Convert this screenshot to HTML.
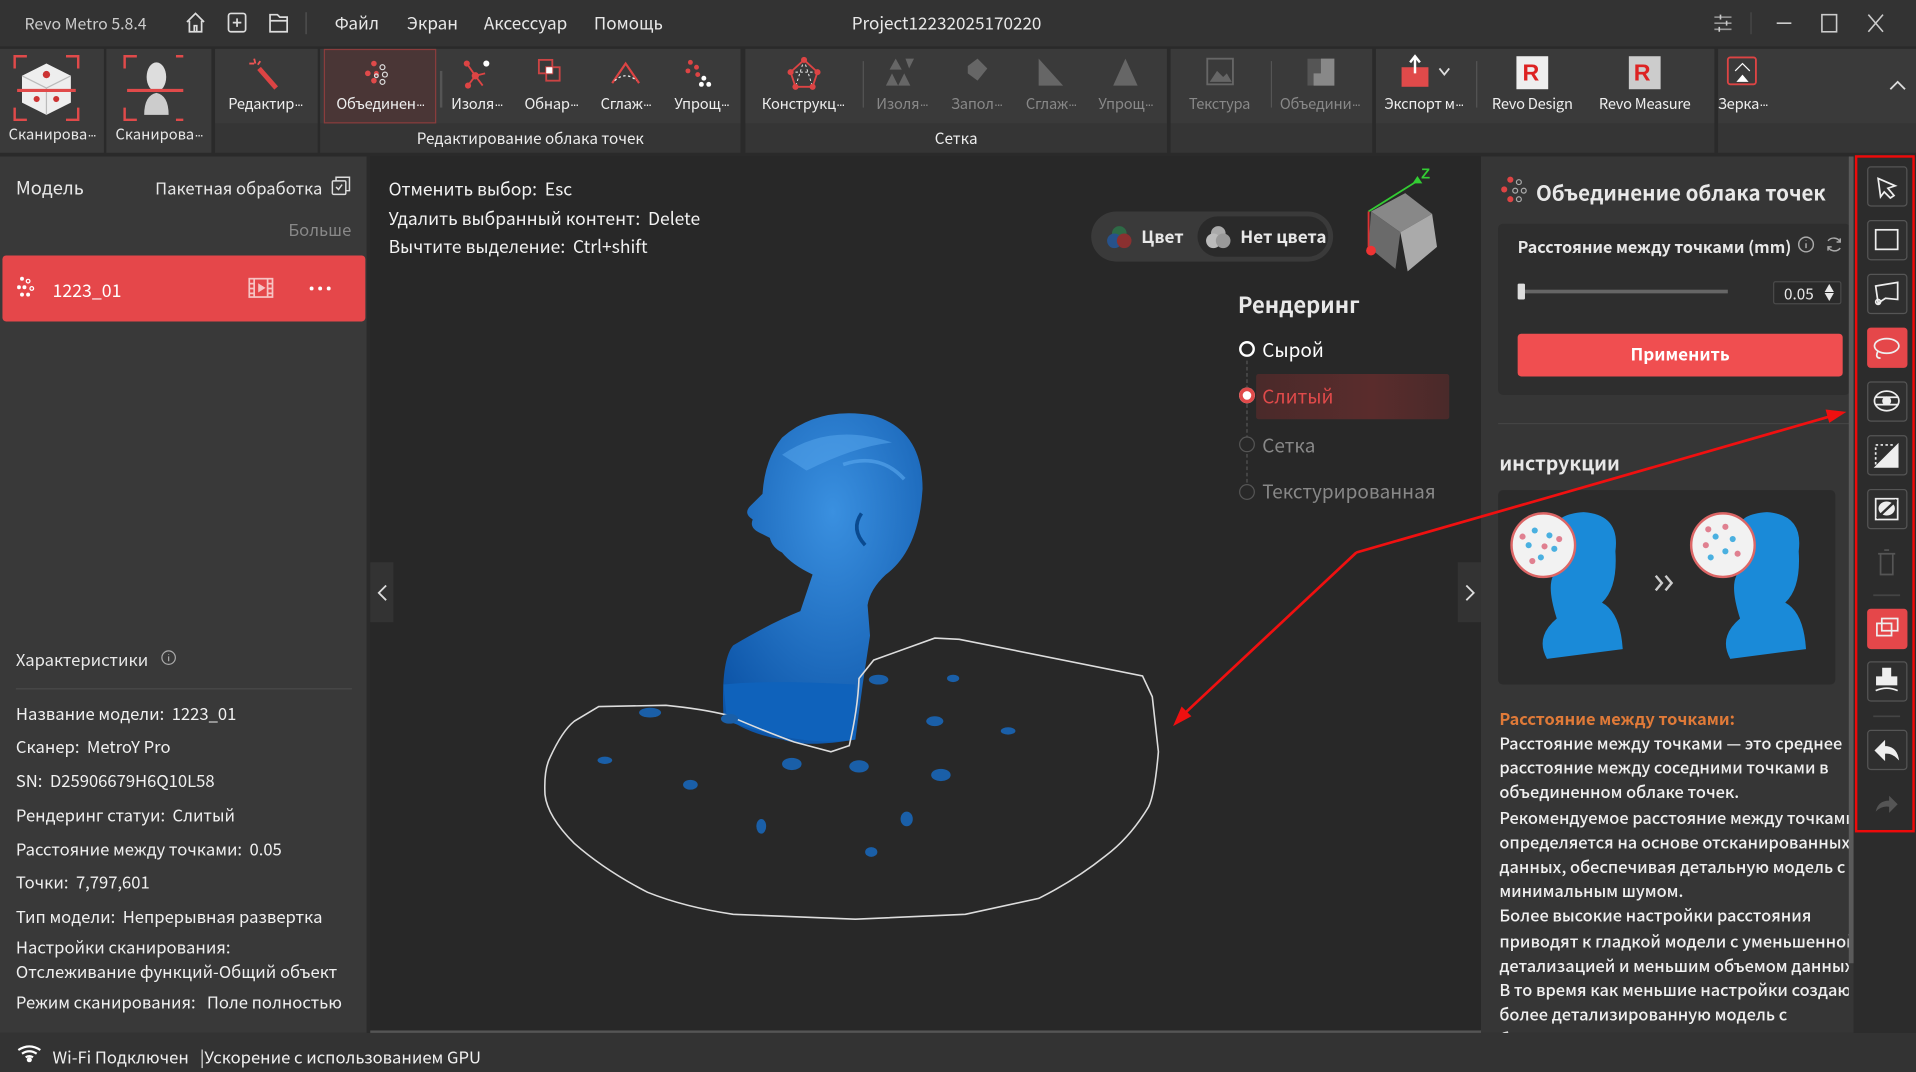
<!DOCTYPE html>
<html><head><meta charset="utf-8">
<style>
*{margin:0;padding:0;box-sizing:border-box}
html,body{width:1916px;height:1072px;overflow:hidden;background:#2a2a2a}
#root{position:absolute;left:0;top:0;width:1568px;height:877px;transform:scale(1.22194,1.22235);transform-origin:0 0;font-family:"Noto Sans CJK SC","Liberation Sans",sans-serif;color:#e8e8e8;background:#2a2a2a;overflow:hidden}
.a{position:absolute;white-space:nowrap}
.tb{background:#333}
.grp{position:absolute;top:40px;height:61px;background:#3a3a3a}
.gl{position:absolute;top:101px;height:24px;background:#353535;font-size:12.5px;text-align:center;line-height:24px;color:#eee;white-space:nowrap}
.lbl{position:absolute;top:76px;font-size:12px;color:#eee;text-align:center;width:100px;margin-left:-50px;white-space:nowrap;letter-spacing:-0.2px}
.dis{color:#888}
.e{font-family:"Liberation Sans",sans-serif;letter-spacing:-1.5px;font-size:11px}
.ico{position:absolute}
.tool{position:absolute;left:1528px;width:33px;height:33px;border:1px solid #555;border-radius:3px;background:#2f2f2f}
.info{font-size:13.6px;line-height:20px;color:#f0f0f0}
</style></head><body><div id="root">

<!-- title bar -->
<div class="a tb" style="left:0;top:0;width:1568px;height:38px"></div>
<div class="a" style="left:20px;top:9px;font-size:13px;color:#ccc">Revo Metro 5.8.4</div>
<svg class="ico" style="left:151px;top:9px" width="90" height="20" viewBox="0 0 90 20" fill="none" stroke="#ddd" stroke-width="1.4">
<path d="M2 9 L9 2 L16 9 M4 8 V17 H14 V8 M8 17 V12 H10 V17"/>
<rect x="36" y="2" width="14" height="15" rx="2"/><path d="M43 6V13M39.5 9.5H46.5"/>
<path d="M70 3H76L78 5H84V17H70Z M70 8H84"/></svg>
<div class="a" style="left:250px;top:10px;width:1px;height:18px;background:#555"></div>
<div class="a" style="left:274px;top:9px;font-size:14px">Файл</div>
<div class="a" style="left:333px;top:9px;font-size:14px">Экран</div>
<div class="a" style="left:396px;top:9px;font-size:14px">Аксессуар</div>
<div class="a" style="left:486px;top:9px;font-size:14px">Помощь</div>
<div class="a" style="left:697px;top:9px;font-size:14px">Project12232025170220</div>
<svg class="ico" style="left:1400px;top:8px" width="150" height="22" viewBox="0 0 150 22" fill="none" stroke="#ccc" stroke-width="1.3">
<path d="M3 6H17M3 11H17M3 16H17" stroke="#999"/><path d="M8 4V8M13 9V13M7 14V18"/>
<path d="M33 2V20" stroke="#444"/><path d="M54 11H66"/><rect x="91" y="4" width="12" height="14"/><path d="M129 4L141 18M141 4L129 18"/></svg>

<!-- toolbar -->
<div class="a" style="left:0;top:38px;width:1568px;height:90px;background:#2a2a2a"></div>
<div class="grp" style="left:0;width:85px;height:85px"></div>
<div class="grp" style="left:87px;width:86px;height:85px"></div>
<div class="grp" style="left:176px;width:84px"></div><div class="gl" style="left:176px;width:84px"></div>
<div class="grp" style="left:262px;width:344px"></div><div class="gl" style="left:262px;width:344px">Редактирование облака точек</div>
<div class="grp" style="left:610px;width:345px"></div><div class="gl" style="left:610px;width:345px">Сетка</div>
<div class="grp" style="left:958px;width:165px"></div><div class="gl" style="left:958px;width:165px"></div>
<div class="grp" style="left:1126px;width:277px"></div><div class="gl" style="left:1126px;width:277px"></div>
<div class="grp" style="left:1406px;width:162px"></div><div class="gl" style="left:1406px;width:162px"></div>
<div class="a" style="left:265px;top:40px;width:92px;height:61px;border:1px solid #8a3d3d;background:#4a3636"></div>
<div class="a" style="left:360px;top:58px;width:2px;height:30px;background:#555"></div>
<div class="a" style="left:706px;top:50px;width:1px;height:38px;background:#555"></div>
<div class="a" style="left:1040px;top:50px;width:1px;height:38px;background:#555"></div>
<div class="a" style="left:1208px;top:50px;width:1px;height:38px;background:#555"></div>

<!-- scan icons -->
<svg class="ico" style="left:10px;top:44px" width="140" height="56" viewBox="0 0 140 56" fill="none" stroke="#e04a4a" stroke-width="2">
<path d="M2 12V2H12M44 2H54V12M2 44V54H12M44 54H54V44"/>
<path d="M28 8L48 18V40L28 50L8 40V18Z" fill="#eee" stroke="none"/><path d="M8 18L28 28L48 18M28 28V50" stroke="#bbb" stroke-width="1"/>
<circle cx="28" cy="17" r="3" fill="#c33" stroke="none"/><circle cx="20" cy="37" r="2.5" fill="#c33" stroke="none"/><circle cx="36" cy="37" r="2.5" fill="#c33" stroke="none"/>
<path d="M4 30H52" stroke-width="2.5"/>
<g transform="translate(90,0)"><path d="M2 12V2H12M44 2H54V12M2 44V54H12M44 54H54V44"/>
<ellipse cx="28" cy="19" rx="8" ry="12" fill="#ddd" stroke="none"/><path d="M18 50Q18 34 28 32Q38 34 38 50Z" fill="#ccc" stroke="none"/><path d="M4 30H52" stroke-width="2.5"/></g></svg>
<div class="a" style="left:0;top:101px;width:85px;text-align:center;font-size:12px">Сканирова<span class="e">···</span></div>
<div class="a" style="left:87px;top:101px;width:86px;text-align:center;font-size:12px">Сканирова<span class="e">···</span></div>

<!-- toolbar icons -->
<svg class="ico" style="left:170px;top:44px" width="1400" height="32" viewBox="170 44 1400 32">
<path d="M212 56L226 72" stroke="#d44" stroke-width="4"/><path d="M208 48L209 52M204 52H208M213 50L211 53" stroke="#e55" stroke-width="1.5"/>
<g fill="#e04a4a"><circle cx="306" cy="52" r="2.3"/><circle cx="301" cy="60" r="2.3"/><circle cx="306" cy="66" r="2.3"/><circle cx="308" cy="60" r="2"/></g>
<g fill="none" stroke="#ddd" stroke-width="1"><circle cx="313" cy="55" r="2"/><circle cx="315" cy="61" r="2"/><circle cx="313" cy="67" r="2"/><circle cx="308" cy="62" r="1.5"/></g>
<path d="M382 52L389 62L383 70M389 62L397 60M389 62L395 70" stroke="#d44" stroke-width="1.5" fill="none"/><g fill="#d44"><circle cx="382" cy="52" r="2.5"/><circle cx="383" cy="70" r="2.5"/><circle cx="389" cy="62" r="3"/></g><circle cx="398" cy="52" r="2.5" fill="#fff"/>
<rect x="441" y="49" width="11" height="11" fill="none" stroke="#c44" stroke-width="1.5"/><rect x="447" y="55" width="11" height="11" fill="none" stroke="#c44" stroke-width="1.5"/><rect x="447" y="55" width="5" height="5" fill="#fff"/>
<path d="M501 68L512 52L523 68" fill="none" stroke="#d44" stroke-width="1.8"/><path d="M503 66Q512 58 521 66" fill="none" stroke="#eee" stroke-width="1" stroke-dasharray="2 2"/>
<g fill="#d44"><circle cx="565" cy="51" r="2"/><circle cx="570" cy="55" r="2"/><circle cx="563" cy="58" r="2"/><circle cx="571" cy="61" r="2"/></g><g fill="#fff"><circle cx="576" cy="64" r="2"/><circle cx="574" cy="69" r="2"/><circle cx="580" cy="69" r="2"/></g>
<path d="M658 49L647 59L651 71H665L669 59Z" fill="none" stroke="#d44" stroke-width="1.5"/><path d="M647 59H669M658 49L651 71M658 49L665 71" stroke="#eee" stroke-width="0.8" stroke-dasharray="2 2" fill="none"/><g fill="#d44"><circle cx="658" cy="49" r="2.5"/><circle cx="647" cy="59" r="2.5"/><circle cx="669" cy="59" r="2.5"/><circle cx="651" cy="71" r="2.5"/><circle cx="665" cy="71" r="2.5"/></g>
<g fill="#666"><path d="M733 48L738 57H728ZM741 48H748L744 56ZM730 60L735 70H725ZM740 60L745 70H735Z"/>
<path d="M792 54L800 48L808 56L800 66L792 60Z"/><path d="M850 48V70H870Z"/><path d="M921 48L931 70H911Z"/>
<rect x="988" y="48" width="21" height="21" fill="none" stroke="#666" stroke-width="1.5"/><path d="M990 67L996 58L1001 63L1004 60L1008 67Z"/>
<rect x="1070" y="48" width="22" height="22" fill="#555"/><path d="M1081 48H1092V70H1075V60H1081Z" fill="#888"/></g>
<rect x="1147" y="55" width="22" height="16" fill="#e04a4a"/><path d="M1158 46V60M1154 51L1158 46L1162 51" stroke="#fff" stroke-width="2" fill="none"/><path d="M1178 56L1182 61L1186 56" stroke="#ddd" stroke-width="1.5" fill="none"/>
<rect x="1241" y="46" width="26" height="27" fill="#eee"/><text x="1246" y="66" font-size="19" font-weight="bold" fill="#d22" font-family="Liberation Sans">R</text>
<rect x="1333" y="46" width="26" height="27" fill="#ccc"/><text x="1337" y="66" font-size="19" font-weight="bold" fill="#d22" font-family="Liberation Sans">R</text>
<rect x="1414" y="47" width="23" height="22" fill="none" stroke="#d44" stroke-width="1.5" rx="2"/><path d="M1420 58L1426 52L1432 58" stroke="#fff" fill="none"/><path d="M1421 67L1426 61L1431 67Z" fill="#fff"/>
<path d="M1547 73L1553 67L1559 73" stroke="#ddd" stroke-width="1.5" fill="none"/></svg>
<div class="lbl" style="left:217px">Редактир<span class="e">···</span></div>
<div class="lbl" style="left:311px">Объединен<span class="e">···</span></div>
<div class="lbl" style="left:390px">Изоля<span class="e">···</span></div>
<div class="lbl" style="left:451px">Обнар<span class="e">···</span></div>
<div class="lbl" style="left:512px">Сглаж<span class="e">···</span></div>
<div class="lbl" style="left:574px">Упрощ<span class="e">···</span></div>
<div class="lbl" style="left:657px">Конструкц<span class="e">···</span></div>
<div class="lbl dis" style="left:738px">Изоля<span class="e">···</span></div>
<div class="lbl dis" style="left:799px">Запол<span class="e">···</span></div>
<div class="lbl dis" style="left:860px">Сглаж<span class="e">···</span></div>
<div class="lbl dis" style="left:921px">Упрощ<span class="e">···</span></div>
<div class="lbl dis" style="left:998px">Текстура</div>
<div class="lbl dis" style="left:1080px">Объедини<span class="e">···</span></div>
<div class="lbl" style="left:1165px">Экспорт м<span class="e">···</span></div>
<div class="lbl" style="left:1254px">Revo Design</div>
<div class="lbl" style="left:1346px">Revo Measure</div>
<div class="lbl" style="left:1426px">Зерка<span class="e">···</span></div>

<!-- left panel -->
<div class="a" style="left:0;top:128px;width:300px;height:717px;background:#393939"></div>
<div class="a" style="left:13px;top:143px;font-size:15px">Модель</div>
<div class="a" style="left:127px;top:143px;font-size:13.6px">Пакетная обработка</div>
<svg class="ico" style="left:271px;top:144px" width="16" height="16" fill="none" stroke="#ddd" stroke-width="1.2"><rect x="1" y="4" width="11" height="11" rx="1"/><path d="M4 4V1H15V12H12M4 9L6 11L9 7"/></svg>
<div class="a" style="left:236px;top:177px;font-size:13.6px;color:#888">Больше</div>
<div class="a" style="left:2px;top:209px;width:297px;height:54px;background:#e5474a;border-radius:3px"></div>
<svg class="ico" style="left:14px;top:226px" width="22" height="22"><g fill="#fff"><circle cx="4" cy="2" r="1.6"/><circle cx="1.5" cy="9" r="1.6"/><circle cx="6" cy="9" r="1.6"/><circle cx="4" cy="15" r="1.6"/><circle cx="9" cy="15" r="1.6"/></g><g fill="none" stroke="#fff"><circle cx="9" cy="4" r="1.5"/><circle cx="12" cy="10" r="1.5"/></g></svg>
<div class="a" style="left:43px;top:227px;font-size:14.5px;color:#fff">1223_01</div>
<svg class="ico" style="left:203px;top:227px" width="22" height="18" fill="none" stroke="#f6c4c4" stroke-width="1.4"><rect x="1" y="1" width="19" height="15"/><path d="M5 1V16M16 1V16M1 5H5M1 9H5M1 13H5M16 5H20M16 9H20M16 13H20"/><path d="M9 6L13 8.5L9 11Z" fill="#f6c4c4"/></svg>
<svg class="ico" style="left:252px;top:234px" width="20" height="4" fill="#fff"><circle cx="3" cy="2" r="1.6"/><circle cx="10" cy="2" r="1.6"/><circle cx="17" cy="2" r="1.6"/></svg>
<div class="a" style="left:13px;top:529px;font-size:13.6px">Характеристики</div>
<svg class="ico" style="left:131px;top:531px" width="14" height="14" fill="none" stroke="#aaa"><circle cx="7" cy="7" r="5.5"/><path d="M7 6V10M7 4V4.5"/></svg>
<div class="a" style="left:13px;top:563px;width:275px;height:1px;background:#4a4a4a"></div>
<div class="a info" style="left:13px;top:573px">Название модели:&nbsp; 1223_01</div>
<div class="a info" style="left:13px;top:600px">Сканер:&nbsp; MetroY Pro</div>
<div class="a info" style="left:13px;top:628px">SN:&nbsp; D25906679H6Q10L58</div>
<div class="a info" style="left:13px;top:656px">Рендеринг статуи:&nbsp; Слитый</div>
<div class="a info" style="left:13px;top:684px">Расстояние между точками:&nbsp; 0.05</div>
<div class="a info" style="left:13px;top:711px">Точки:&nbsp; 7,797,601</div>
<div class="a info" style="left:13px;top:739px">Тип модели:&nbsp; Непрерывная развертка</div>
<div class="a info" style="left:13px;top:764px">Настройки сканирования:</div>
<div class="a info" style="left:13px;top:784px">Отслеживание функций-Общий объект</div>
<div class="a info" style="left:13px;top:809px">Режим сканирования:&nbsp;&nbsp; Поле полностью</div>

<!-- viewport -->
<div class="a" style="left:303px;top:128px;width:909px;height:715px;background:#282828"></div>
<div class="a" style="left:318px;top:143px;font-size:14.3px;line-height:23.5px;color:#f2f2f2">Отменить выбор:&nbsp; Esc<br>Удалить выбранный контент:&nbsp; Delete<br>Вычтите выделение:&nbsp; Ctrl+shift</div>
<div class="a" style="left:893px;top:173px;width:198px;height:41px;border-radius:21px;background:#3a3a3a"></div>
<div class="a" style="left:980px;top:177px;width:107px;height:33px;border-radius:17px;background:#2a2a2a"></div>
<svg class="ico" style="left:904px;top:183px" width="200" height="22"><circle cx="12" cy="8" r="6" fill="#2e6a46"/><circle cx="8" cy="14" r="6" fill="#27528a"/><circle cx="16" cy="14" r="6" fill="#8a3030"/>
<circle cx="93" cy="8" r="6" fill="#aaa"/><circle cx="89" cy="14" r="6" fill="#bbb"/><circle cx="97" cy="14" r="6" fill="#999"/></svg>
<div class="a" style="left:934px;top:184px;font-size:14px;font-weight:bold">Цвет</div>
<div class="a" style="left:1015px;top:184px;font-size:14px;font-weight:bold">Нет цвета</div>
<svg class="ico" style="left:1110px;top:130px" width="80" height="95" viewBox="0 0 80 95">
<path d="M12 43L40 28L62 45L36 60Z" fill="#888"/><path d="M12 43L36 60L32 90L10 72Z" fill="#6a6a6a"/><path d="M36 60L62 45L66 72L42 92Z" fill="#aaa"/>
<path d="M10 43L50 18" stroke="#3c3" stroke-width="1.5"/><path d="M50 14L54 20L46 20Z" fill="#3c3"/><text x="53" y="16" font-size="12" font-weight="bold" fill="#3c3" font-family="Liberation Sans">Z</text>
<path d="M10 43V72" stroke="#d33" stroke-width="1.5"/><circle cx="12" cy="75" r="4" fill="#e33"/></svg>
<div class="a" style="left:1013px;top:236px;font-size:18px;font-weight:bold">Рендеринг</div>
<div class="a" style="left:1028px;top:306px;width:158px;height:37px;background:linear-gradient(90deg,#4a2a2a,#5a2c2c 60%,#4a2a2a);border-radius:2px"></div>
<div class="a" style="left:1020px;top:295px;width:0;height:110px;border-left:1px dashed #555"></div>
<div class="a" style="left:1014px;top:279px;width:13px;height:13px;border:2px solid #fff;border-radius:50%;background:#282828"></div>
<div class="a" style="left:1014px;top:317px;width:13px;height:13px;border-radius:50%;background:#fff;box-shadow:0 0 0 3px #e04a4a inset"></div>
<div class="a" style="left:1014px;top:357px;width:13px;height:13px;border:1.5px solid #555;border-radius:50%;background:#282828"></div>
<div class="a" style="left:1014px;top:396px;width:13px;height:13px;border:1.5px solid #555;border-radius:50%;background:#282828"></div>
<div class="a" style="left:1033px;top:275px;font-size:15.5px;color:#fff">Сырой</div>
<div class="a" style="left:1033px;top:313px;font-size:15.5px;color:#e04a4a">Слитый</div>
<div class="a" style="left:1033px;top:353px;font-size:15.5px;color:#888">Сетка</div>
<div class="a" style="left:1033px;top:391px;font-size:15.5px;color:#888">Текстурированная</div>
<div class="a" style="left:303px;top:460px;width:19px;height:49px;background:#333"></div>
<div class="a" style="left:1193px;top:460px;width:19px;height:49px;background:#333"></div>
<svg class="ico" style="left:303px;top:128px" width="910" height="715" viewBox="303 128 910 715">
<path d="M316 479L310 485L316 491M1200 479L1206 485L1200 491" stroke="#ddd" stroke-width="1.5" fill="none"/>
<defs><radialGradient id="g" cx="0.55" cy="0.3" r="0.75"><stop offset="0" stop-color="#3a90e0"/><stop offset="1" stop-color="#0d55a8"/></radialGradient></defs>
<!-- bust -->
<path d="M592 585 Q590 540 600 528 Q630 510 655 500 L665 470 Q648 462 640 452 Q632 448 630 440 L622 436 Q613 432 616 425 Q608 420 614 414 L624 404 Q626 375 640 358 Q670 332 715 340 Q755 352 755 400 Q752 450 725 470 Q712 482 710 495 L712 520 L706 560 L700 605 Q660 612 640 605 Q610 600 592 585 Z" fill="url(#g)"/>
<path d="M592 560 Q630 556 700 560 L700 605 Q660 612 595 590 Z" fill="#0f62bb"/>
<path d="M640 372 Q680 345 730 362 Q700 365 660 385Z" fill="#5aaaf0" opacity="0.5"/>
<path d="M690 380 Q720 370 740 392" stroke="#5aa8ee" stroke-width="3" fill="none" opacity="0.6"/>
<path d="M705 420 Q696 433 708 446" stroke="#0a4a90" stroke-width="3" fill="none"/>
<!-- loop -->
<path d="M490 578 L545 577 Q575 580 595 585 Q630 600 650 607 L680 615 L695 610 Q702 580 703 555 L715 540 L765 522 L785 523 L935 553 L943 570 L948 615 Q945 650 940 660 Q925 685 905 700 Q880 720 850 735 L790 748 L700 752 L600 748 Q560 742 530 730 Q495 712 470 690 Q448 668 446 650 Q445 630 450 620 Q460 598 470 590 Z" fill="none" stroke="#ddd" stroke-width="1.3"/>
<g fill="#1a5fa8"><ellipse cx="532" cy="583" rx="9" ry="4"/><ellipse cx="495" cy="622" rx="6" ry="3"/><ellipse cx="565" cy="642" rx="6" ry="4"/><ellipse cx="648" cy="625" rx="8" ry="5"/><ellipse cx="703" cy="627" rx="8" ry="5"/><ellipse cx="770" cy="634" rx="8" ry="5"/><ellipse cx="719" cy="556" rx="8" ry="4"/><ellipse cx="780" cy="555" rx="5" ry="3"/><ellipse cx="765" cy="590" rx="7" ry="4"/><ellipse cx="825" cy="598" rx="6" ry="3"/><ellipse cx="742" cy="670" rx="5" ry="6"/><ellipse cx="623" cy="676" rx="4" ry="6"/><ellipse cx="713" cy="697" rx="5" ry="4"/><ellipse cx="597" cy="588" rx="7" ry="4"/></g>
</svg>

<!-- right panel -->
<div class="a" style="left:1212px;top:128px;width:305px;height:717px;background:#363636"></div>
<svg class="ico" style="left:1228px;top:144px" width="30" height="26"><g fill="#d44"><circle cx="8" cy="3" r="2.5"/><circle cx="3" cy="11" r="2.5"/><circle cx="8" cy="19" r="2.5"/></g><g fill="none" stroke="#aaa"><circle cx="15" cy="5" r="2"/><circle cx="12" cy="12" r="2"/><circle cx="19" cy="12" r="2"/><circle cx="15" cy="19" r="2"/></g></svg>
<div class="a" style="left:1257px;top:145px;font-size:16.8px;font-weight:bold">Объединение облака точек</div>
<div class="a" style="left:1226px;top:183px;width:288px;height:140px;background:#2e2e2e;border-radius:4px"></div>
<div class="a" style="left:1242px;top:192px;font-size:13.2px;font-weight:bold">Расстояние между точками (mm)</div>
<svg class="ico" style="left:1470px;top:192px" width="40" height="18" fill="none" stroke="#aaa" stroke-width="1.2"><circle cx="8" cy="8" r="6"/><path d="M8 7V11M8 4.5V5"/><path d="M26 5A6 6 0 0 1 36 6M36 11A6 6 0 0 1 26 10M36 3V6H33M26 13V10H29"/></svg>
<div class="a" style="left:1243px;top:237px;width:171px;height:3px;background:#666"></div>
<div class="a" style="left:1242px;top:232px;width:6px;height:13px;background:#ddd;border-radius:1px"></div>
<div class="a" style="left:1451px;top:230px;width:56px;height:19px;border:1px solid #4a4a4a;background:#2a2a2a;border-radius:2px;font-size:12.5px;line-height:17px;padding-left:8px">0.05<span style="position:absolute;right:5px;font-size:8px;line-height:7px;top:2px">▲<br>▼</span></div>
<div class="a" style="left:1242px;top:273px;width:266px;height:35px;background:#f04e50;border-radius:3px;text-align:center;line-height:34px;font-size:14px;font-weight:bold;color:#fff">Применить</div>
<div class="a" style="left:1226px;top:346px;width:288px;height:1px;background:#444"></div>
<div class="a" style="left:1227px;top:366px;font-size:16px;font-weight:bold">инструкции</div>
<div class="a" style="left:1226px;top:401px;width:276px;height:159px;background:#2b2b2b;border-radius:4px"></div>
<svg class="ico" style="left:1226px;top:401px" width="276" height="159">
<g fill="#1a8ad8"><path d="M50 40Q40 20 70 18Q100 20 96 50Q98 80 85 92Q100 100 102 130L40 138Q30 120 48 105Q40 80 45 70Z"/>
<path d="M200 40Q190 20 220 18Q250 20 246 50Q248 80 235 92Q250 100 252 130L190 138Q180 120 198 105Q190 80 195 70Z"/></g>
<circle cx="37" cy="45" r="26" fill="#f2f2f2" stroke="#d66" stroke-width="2"/><circle cx="184" cy="45" r="26" fill="#f2f2f2" stroke="#d66" stroke-width="2"/>
<g fill="#4ab0e0"><circle cx="30" cy="33" r="2.5"/><circle cx="42" cy="37" r="2.5"/><circle cx="25" cy="45" r="2.5"/><circle cx="46" cy="48" r="2.5"/><circle cx="35" cy="55" r="2.5"/><circle cx="178" cy="38" r="2.5"/><circle cx="192" cy="40" r="2.5"/><circle cx="186" cy="50" r="2.5"/><circle cx="174" cy="55" r="2.5"/></g>
<g fill="#e08090"><circle cx="20" cy="38" r="2.5"/><circle cx="50" cy="40" r="2.5"/><circle cx="38" cy="46" r="2.5"/><circle cx="28" cy="58" r="2.5"/><circle cx="172" cy="32" r="2.5"/><circle cx="186" cy="30" r="2.5"/><circle cx="196" cy="52" r="2.5"/><circle cx="170" cy="45" r="2.5"/></g>
<path d="M129 70L134 76L129 82M137 70L142 76L137 82" stroke="#ccc" stroke-width="2" fill="none"/></svg>
<div class="a" style="left:1227px;top:577px;font-size:13.4px;font-weight:bold;color:#e07a38">Расстояние между точками:</div>
<div class="a" style="left:1227px;top:597px;width:286px;overflow:hidden;font-size:13.4px;line-height:20.2px;color:#f0f0f0;font-weight:500">Расстояние между точками — это среднее<br>расстояние между соседними точками в<br>объединенном облаке точек.<br>Рекомендуемое расстояние между точками<br>определяется на основе отсканированных<br>данных, обеспечивая детальную модель с<br>минимальным шумом.<br>Более высокие настройки расстояния<br>приводят к гладкой модели с уменьшенной<br>детализацией и меньшим объемом данных.<br>В то время как меньшие настройки создают<br>более детализированную модель с<br>большим</div>
<div class="a" style="left:1513px;top:128px;width:4px;height:660px;background:#5a5a5a"></div>

<!-- right tool strip -->
<div class="a" style="left:1517px;top:128px;width:51px;height:717px;background:#2c2c2c"></div>
<div class="tool" style="top:136px"></div><div class="tool" style="top:180px"></div><div class="tool" style="top:224px"></div>
<div class="tool" style="top:268px;background:#e5474a;border-color:#e5474a"></div>
<div class="tool" style="top:312px"></div><div class="tool" style="top:356px"></div><div class="tool" style="top:400px"></div>
<div class="tool" style="top:498px;background:#e5474a;border-color:#e5474a"></div>
<div class="tool" style="top:541px"></div><div class="tool" style="top:597px"></div>
<svg class="ico" style="left:1517px;top:128px" width="51" height="560" viewBox="1517 128 51 560" fill="none" stroke="#eee" stroke-width="1.4">
<path d="M1537 146L1551 152L1545 154L1550 160L1547 162L1542 157L1539 161Z"/>
<rect x="1535" y="188" width="18" height="16"/>
<path d="M1535 234L1553 231V245L1543 244L1537 248Z"/><circle cx="1537" cy="247" r="2"/>
<ellipse cx="1544" cy="283" rx="10" ry="6"/><path d="M1537 287Q1534 293 1539 293"/>
<ellipse cx="1544" cy="328" rx="10" ry="8"/><path d="M1535 325H1553M1535 331H1553"/><circle cx="1544" cy="328" r="3" fill="#eee"/>
<path d="M1535 382L1553 364V382Z" fill="#eee"/><path d="M1535 380V364H1551" stroke-dasharray="2 2"/>
<rect x="1535" y="408" width="18" height="17"/><ellipse cx="1544" cy="416" rx="6" ry="5" fill="#eee"/><path d="M1536 424L1552 409" stroke="#2f2f2f" stroke-width="2"/>
<path d="M1537 453H1551M1539 453V470H1549V453M1542 450H1546" stroke="#555"/>
<path d="M1533 487H1555" stroke="#444"/>
<rect x="1536" y="510" width="12" height="10"/><rect x="1540" y="506" width="13" height="10"/>
<path d="M1541 547H1547V554H1552V560H1536V554H1541Z" fill="#eee"/><path d="M1535 565Q1544 561 1553 565"/>
<path d="M1533 586H1555" stroke="#444"/>
<path d="M1535 614L1542 607V611Q1551 611 1553 620Q1548 615 1542 616V621Z" fill="#eee"/>
<path d="M1553 658L1546 651V655Q1537 655 1535 664Q1540 659 1546 660V665Z" fill="#555" stroke="none"/></svg>
<div class="a" style="left:1518px;top:127px;width:49px;height:554px;border:2.5px solid #ee0a0a"></div>

<!-- red arrows -->
<svg class="ico" style="left:0;top:0" width="1568" height="877">
<path d="M1110 452L1500 340M1110 452L968 585" stroke="#f01010" stroke-width="2.2" fill="none"/>
<path d="M1511 337L1494 335L1497 346Z" fill="#f01010"/><path d="M960 594L967 578L975 586Z" fill="#f01010"/></svg>

<!-- status bar -->
<div class="a" style="left:0;top:845px;width:1568px;height:32px;background:#333"></div>
<div class="a" style="left:303px;top:843px;width:909px;height:2px;background:#555"></div>
<svg class="ico" style="left:14px;top:855px" width="20" height="14" fill="none" stroke="#fff" stroke-width="1.8"><path d="M1 4Q10 -2 19 4M4 7Q10 3 16 7M7 10Q10 8 13 10"/><circle cx="10" cy="12" r="1.2" fill="#fff"/></svg>
<div class="a" style="left:43px;top:854px;font-size:13.6px;color:#f0f0f0">Wi-Fi Подключен&nbsp;&nbsp; |Ускорение с использованием GPU</div>
</div></body></html>
